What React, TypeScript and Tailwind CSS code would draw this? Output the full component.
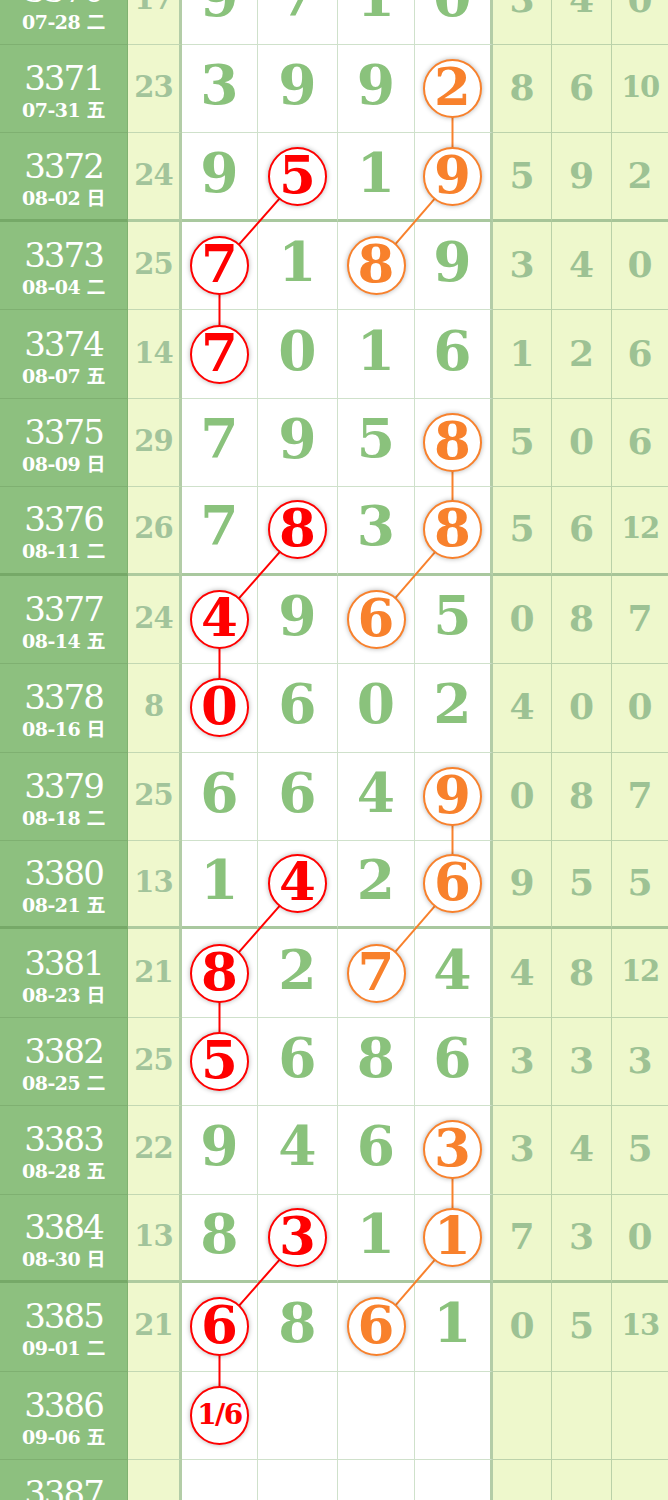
const ROW_H = 88.44;

type Row = { n: number; d: string; c: string; m: string[]; r: string[] };

// m: "r5" = red circle, "o2" = orange circle
const rows: Row[] = [
  { n: 3370, d: "07-28 二", c: "17", m: ["9", "7", "1", "0"], r: ["3", "4", "0"] },
  { n: 3371, d: "07-31 五", c: "23", m: ["3", "9", "9", "o2"], r: ["8", "6", "10"] },
  { n: 3372, d: "08-02 日", c: "24", m: ["9", "r5", "1", "o9"], r: ["5", "9", "2"] },
  { n: 3373, d: "08-04 二", c: "25", m: ["r7", "1", "o8", "9"], r: ["3", "4", "0"] },
  { n: 3374, d: "08-07 五", c: "14", m: ["r7", "0", "1", "6"], r: ["1", "2", "6"] },
  { n: 3375, d: "08-09 日", c: "29", m: ["7", "9", "5", "o8"], r: ["5", "0", "6"] },
  { n: 3376, d: "08-11 二", c: "26", m: ["7", "r8", "3", "o8"], r: ["5", "6", "12"] },
  { n: 3377, d: "08-14 五", c: "24", m: ["r4", "9", "o6", "5"], r: ["0", "8", "7"] },
  { n: 3378, d: "08-16 日", c: "8", m: ["r0", "6", "0", "2"], r: ["4", "0", "0"] },
  { n: 3379, d: "08-18 二", c: "25", m: ["6", "6", "4", "o9"], r: ["0", "8", "7"] },
  { n: 3380, d: "08-21 五", c: "13", m: ["1", "r4", "2", "o6"], r: ["9", "5", "5"] },
  { n: 3381, d: "08-23 日", c: "21", m: ["r8", "2", "o7", "4"], r: ["4", "8", "12"] },
  { n: 3382, d: "08-25 二", c: "25", m: ["r5", "6", "8", "6"], r: ["3", "3", "3"] },
  { n: 3383, d: "08-28 五", c: "22", m: ["9", "4", "6", "o3"], r: ["3", "4", "5"] },
  { n: 3384, d: "08-30 日", c: "13", m: ["8", "r3", "1", "o1"], r: ["7", "3", "0"] },
  { n: 3385, d: "09-01 二", c: "21", m: ["r6", "8", "o6", "1"], r: ["0", "5", "13"] },
  { n: 3386, d: "09-06 五", c: "", m: ["r1/6", "", "", ""], r: ["", "", ""] },
  { n: 3387, d: "09-08 日", c: "", m: ["", "", "", ""], r: ["", "", ""] },
];

const colCenters = [219.5, 297.5, 376, 452.5];
const mainW = ["w-[76px]", "w-[80px]", "w-[77px]", "w-[78px] border-r-[3px] border-r-[#b3cda7]"];
const rightW = ["w-[59px]", "w-[60px]", "w-[56px]"];

const serif = "font-['DejaVu_Serif','Noto_Sans_CJK_SC',serif]";

function segments(color: "r" | "o") {
  const pts: { i: number; x: number; y: number }[] = [];
  rows.forEach((row, i) =>
    row.m.forEach((v, j) => {
      if (v.startsWith(color)) pts.push({ i, x: colCenters[j], y: ROW_H * i + ROW_H / 2 });
    })
  );
  const segs: number[][] = [];
  for (let k = 1; k < pts.length; k++) {
    if (pts[k].i === pts[k - 1].i + 1) segs.push([pts[k - 1].x, pts[k - 1].y, pts[k].x, pts[k].y]);
  }
  return segs;
}

const Ball = ({ v }: { v: string }) => {
  const red = v[0] === "r";
  const t = v.slice(1);
  return (
    <div
      className={`relative z-10 flex h-[59px] w-[59px] items-center justify-center rounded-full border-2 bg-white shadow-[0_0_5px_rgba(0,0,0,0.3)] ${
        red ? "border-[#ff0000] text-[#ff0000]" : "border-[#f8812c] text-[#f8812c]"
      }`}
    >
      <span className={`font-bold leading-none ${t.length > 1 ? "text-[28px] tracking-[-1.5px]" : "pb-[4px] text-[53px]"}`}>
        {t}
      </span>
    </div>
  );
};

export default function App() {
  const red = segments("r");
  const orange = segments("o");

  return (
    <div className={`h-[1500px] w-[668px] overflow-hidden bg-white ${serif}`}>
      <div className="relative mt-[-43.44px]">
        <svg className="pointer-events-none absolute left-0 top-0" width={668} height={ROW_H * rows.length}>
          {red.map((s, k) => (
            <line key={"r" + k} x1={s[0]} y1={s[1]} x2={s[2]} y2={s[3]} stroke="#ff0000" strokeWidth={2} />
          ))}
          {orange.map((s, k) => (
            <line key={"o" + k} x1={s[0]} y1={s[1]} x2={s[2]} y2={s[3]} stroke="#f8812c" strokeWidth={2} />
          ))}
        </svg>

        {rows.map(row => {
          const thick = (row.n - 3372) % 4 === 0;
          const bb = thick ? "border-b-[3px]" : "border-b";
          return (
            <div key={row.n} className="flex h-[88.44px]">
              <div
                className={`flex w-[128px] flex-col items-center justify-center border-r border-r-[#80b271] bg-[#8dc07f] pt-[4px] text-white ${bb} ${
                  thick ? "border-b-[#76a968]" : "border-b-[#7fb071]"
                }`}
              >
                <span className="text-[34px] leading-[36px] tracking-[-2px]">{row.n}</span>
                <span className="mt-[3px] text-[19px] font-bold leading-[22px] tracking-[-0.5px]">{row.d}</span>
              </div>

              <div
                className={`flex w-[54px] items-center justify-center border-r-[3px] border-r-[#b3cda7] bg-[#eff8cd] ${bb} ${
                  thick ? "border-b-[#aecb9f]" : "border-b-[#c3d8b3]"
                }`}
              >
                <span className="pb-[2px] text-[29px] font-bold leading-none tracking-[-1px] text-[#a2c49b]">{row.c}</span>
              </div>

              {row.m.map((v, j) => (
                <div
                  key={j}
                  className={`flex items-center justify-center bg-white ${mainW[j]} ${j < 3 ? "border-r border-r-[#cfe1cb]" : ""} ${bb} ${
                    thick ? "border-b-[#a9c89f]" : "border-b-[#cfe1cb]"
                  }`}
                >
                  {v === "" ? null : v[0] === "r" || v[0] === "o" ? (
                    <Ball v={v} />
                  ) : (
                    <span className="pb-[8px] text-[55px] font-bold leading-none text-[#8ac27c]">{v}</span>
                  )}
                </div>
              ))}

              {row.r.map((v, j) => (
                <div
                  key={j}
                  className={`flex items-center justify-center bg-[#eef8cc] ${rightW[j]} ${j < 2 ? "border-r border-r-[#b9d1a8]" : ""} ${bb} ${
                    thick ? "border-b-[#a7c598]" : "border-b-[#bcd3ab]"
                  }`}
                >
                  <span
                    className={`pb-[3px] font-bold leading-none text-[#9dc294] ${v.length > 1 ? "text-[29px] tracking-[-1.5px]" : "text-[36px]"}`}
                  >
                    {v}
                  </span>
                </div>
              ))}
            </div>
          );
        })}
      </div>
    </div>
  );
}
